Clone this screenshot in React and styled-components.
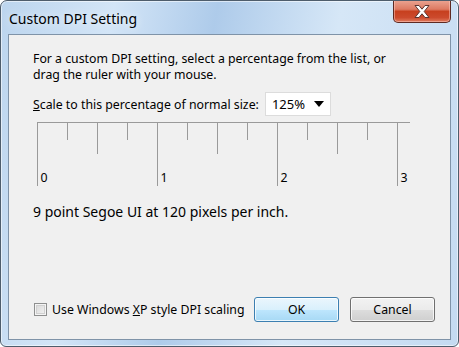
import React from "react";
import styled, { createGlobalStyle } from "styled-components";

const Global = createGlobalStyle`
  html, body { margin: 0; padding: 0; background: #ffffff; }
  body { font-family: "Noto Sans", "Open Sans", sans-serif; }
`;

const Window = styled.div`
  width: 459px;
  height: 347px;
  box-sizing: border-box;
  border: 1px solid #4e5d6c;
  border-radius: 7px 7px 6px 6px;
  background: linear-gradient(100deg, #bcd5ee 0%, #d3e5f7 22%, #aecbea 42%, #d6e7f7 66%, #c4daf1 100%);
  box-shadow: inset 0 0 0 1px rgba(255, 255, 255, 0.55);
  display: flex;
  flex-direction: column;
  overflow: hidden;
  font-family: "Noto Sans", sans-serif;
`;

const TitleBar = styled.div`
  height: 33px;
  display: flex;
  align-items: flex-start;
  justify-content: space-between;
  padding-left: 8px;
  padding-right: 7px;
`;

const Title = styled.div`
  margin-top: 8px;
  font-size: 14px;
  color: #000;
  text-shadow: 0 0 8px rgba(255, 255, 255, 0.9);
`;

const CloseButton = styled.div`
  width: 58px;
  height: 23px;
  margin-top: -1px;
  box-sizing: border-box;
  border: 1px solid #5e2a22;
  border-top: none;
  border-radius: 0 0 5px 5px;
  background: linear-gradient(180deg, #eba694 0%, #dd7a62 42%, #c7401f 52%, #cc4a2d 80%, #e07d5f 100%);
  box-shadow: inset 0 0 0 1px rgba(255, 205, 195, 0.5);
  display: flex;
  align-items: center;
  justify-content: center;
`;

const Client = styled.div`
  margin: 0 7px 6px 7px;
  flex: 1;
  box-sizing: border-box;
  border: 1px solid #7f93a8;
  background: #f0f0f0;
  display: flex;
  flex-direction: column;
  padding: 16px 15px 17px 24px;
  color: #000;
  font-size: 12.3px;
`;

const Paragraph = styled.p`
  margin: 0;
  line-height: 16px;
`;

const ScaleRow = styled.div`
  margin-top: 9px;
  display: flex;
  align-items: center;
  gap: 6px;
  height: 24px;
`;

const Dropdown = styled.div`
  width: 66px;
  height: 24px;
  box-sizing: border-box;
  border: 1px solid #dcdcdc;
  background: #ffffff;
  display: flex;
  align-items: center;
  justify-content: space-between;
  padding: 0 6px 0 6px;
  font-size: 13px;
`;

const Arrow = styled.span`
  width: 0;
  height: 0;
  border-left: 5px solid transparent;
  border-right: 5px solid transparent;
  border-top: 6px solid #000;
`;

const RulerSvg = styled.svg`
  display: block;
  margin-top: 5px;
`;

const Preview = styled.div`
  margin-top: 16px;
  font-size: 14px;
  line-height: 18px;
`;

const Spacer = styled.div`
  flex: 1;
`;

const Footer = styled.div`
  display: flex;
  align-items: center;
  justify-content: space-between;
`;

const CheckLabel = styled.label`
  display: flex;
  align-items: center;
  gap: 5px;
  margin-left: 1px;
`;

const CheckBox = styled.span`
  width: 13px;
  height: 13px;
  box-sizing: border-box;
  border: 1px solid #8e8f8f;
  background: linear-gradient(135deg, #d6d6d6 0%, #f4f4f4 100%);
  box-shadow: inset 0 0 0 1px #f4f4f4, inset 0 0 0 2px #d0d0d0;
`;

const Buttons = styled.div`
  display: flex;
  gap: 11px;
`;

const Button = styled.button`
  width: 85px;
  height: 25px;
  box-sizing: border-box;
  border-radius: 3px;
  font-family: "Noto Sans", sans-serif;
  font-size: 12.3px;
  color: #000;
  padding: 0;
  border: 1px solid ${(p) => (p.$default ? "#3c7fb1" : "#707070")};
  background: ${(p) =>
    p.$default
      ? "linear-gradient(180deg, #eaf6fd 0%, #d9f0fc 50%, #bee6fd 51%, #a7d9f5 100%)"
      : "linear-gradient(180deg, #f2f2f2 0%, #ebebeb 50%, #dddddd 51%, #cfcfcf 100%)"};
  box-shadow: inset 0 0 0 1px rgba(255, 255, 255, 0.75);
`;

function Ruler() {
  const x0 = 4.5;
  const ticks = [];
  for (let i = 0; i <= 12; i++) {
    const x = x0 + i * 30;
    let len;
    if (i % 4 === 0) len = 64;
    else if (i % 2 === 0) len = 32;
    else len = 18;
    ticks.push(<line key={i} x1={x} y1={1} x2={x} y2={1 + len} stroke="#9a9a9a" strokeWidth="1" />);
  }
  return (
    <RulerSvg width="390" height="66" viewBox="0 0 390 66">
      <line x1={x0 - 0.5} y1={1.5} x2={377} y2={1.5} stroke="#9a9a9a" strokeWidth="1" />
      {ticks}
      {[0, 1, 2, 3].map((n) => (
        <text key={n} x={x0 + n * 120 + 3} y={61} fontSize="12.3" fontFamily="Noto Sans, sans-serif" fill="#000">
          {n}
        </text>
      ))}
    </RulerSvg>
  );
}

export default function App() {
  return (
    <>
      <Global />
      <Window>
        <TitleBar>
          <Title>Custom DPI Setting</Title>
          <CloseButton>
            <svg width="20" height="15" viewBox="0 0 20 15">
              <path
                d="M3 1.5 L7 1.5 L10 5.2 L13 1.5 L17 1.5 L12.2 7.5 L17 13.5 L13 13.5 L10 9.8 L7 13.5 L3 13.5 L7.8 7.5 Z"
                fill="#ffffff"
                stroke="#5a3530"
                strokeWidth="1"
                strokeLinejoin="round"
              />
            </svg>
          </CloseButton>
        </TitleBar>
        <Client>
          <Paragraph>
            For a custom DPI setting, select a percentage from the list, or
            <br />
            drag the ruler with your mouse.
          </Paragraph>
          <ScaleRow>
            <span>
              <u>S</u>cale to this percentage of normal size:
            </span>
            <Dropdown>
              <span>125%</span>
              <Arrow />
            </Dropdown>
          </ScaleRow>
          <Ruler />
          <Preview>9 point Segoe UI at 120 pixels per inch.</Preview>
          <Spacer />
          <Footer>
            <CheckLabel>
              <CheckBox />
              <span>
                Use Windows <u>X</u>P style DPI scaling
              </span>
            </CheckLabel>
            <Buttons>
              <Button $default>OK</Button>
              <Button>Cancel</Button>
            </Buttons>
          </Footer>
        </Client>
      </Window>
    </>
  );
}
